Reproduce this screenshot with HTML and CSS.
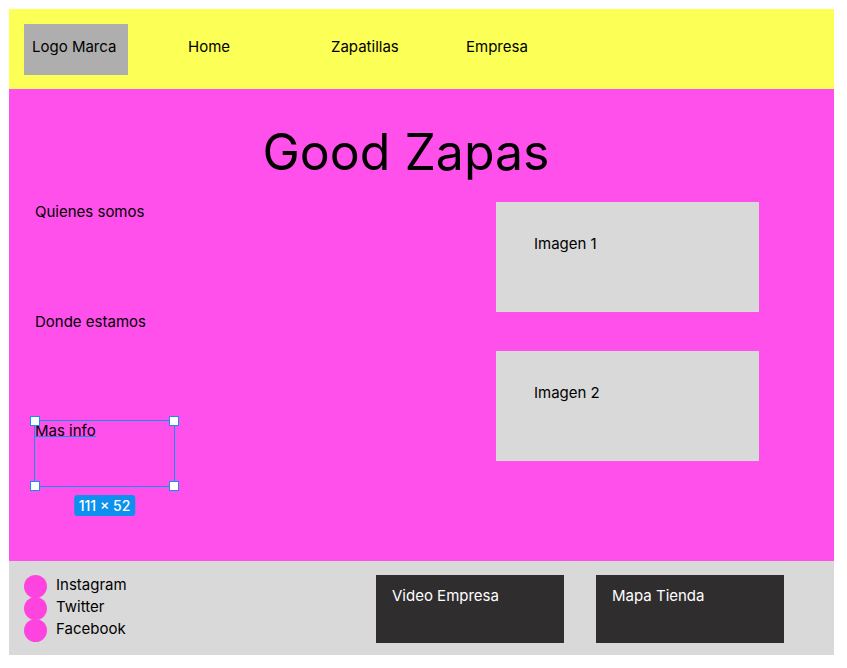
FILE: index.html
```html
<!DOCTYPE html>
<html lang="es">
<head>
<meta charset="utf-8">
<meta name="viewport" content="width=device-width, initial-scale=1">
<title>Good Zapas</title>
<link rel="stylesheet" href="styles.css">
</head>
<body>
<div class="page">
  <header class="header">
    <div class="logo">Logo Marca</div>
    <nav class="nav">
      <a href="#home">Home</a>
      <a href="#zapatillas">Zapatillas</a>
      <a href="#empresa">Empresa</a>
    </nav>
  </header>
  <main class="main">
    <h1 class="title">Good Zapas</h1>
    <div class="content">
      <div class="topics">
        <p class="topic">Quienes somos</p>
        <p class="topic">Donde estamos</p>
        <div class="selected">
          <span class="selected-text">Mas info</span>
          <i class="handle top left"></i>
          <i class="handle top right"></i>
          <i class="handle bottom left"></i>
          <i class="handle bottom right"></i>
          <span class="size">111 × 52</span>
        </div>
      </div>
      <div class="images">
        <div class="image">Imagen 1</div>
        <div class="image">Imagen 2</div>
      </div>
    </div>
  </main>
  <footer class="footer">
    <ul class="social">
      <li><a href="#instagram">Instagram</a></li>
      <li><a href="#twitter">Twitter</a></li>
      <li><a href="#facebook">Facebook</a></li>
    </ul>
    <div class="cards">
      <div class="card">Video Empresa</div>
      <div class="card">Mapa Tienda</div>
    </div>
  </footer>
</div>
</body>
</html>
```
FILE: styles.css
```css
* {
  box-sizing: border-box;
}

body {
  margin: 0;
  background: #fff;
  color: #000;
  font: 15px/20px Inter, "Liberation Sans", sans-serif;
}

a {
  color: inherit;
  text-decoration: none;
}

.page {
  padding: 9px 13px 13px 9px;
}

.header {
  display: flex;
  align-items: flex-start;
  padding: 15px 15px 14px;
  background: #fcff55;
}

.logo {
  width: 104px;
  padding: 13px 8px 18px;
  background: #aeaeae;
  white-space: nowrap;
}

.nav {
  display: grid;
  grid-template-columns: 143px 135px auto;
  margin-left: 60px;
  padding-top: 13px;
}

.main {
  padding: 31px 0 75px 26px;
  background: #ff50ec;
}

.title {
  margin: 0 57px 18px 0;
  font-size: 50px;
  font-weight: 400;
  line-height: 64px;
  text-align: center;
}

.content {
  display: grid;
  grid-template-columns: 461fr 338fr;
}

.topic {
  height: 110px;
  margin: 0;
}

.selected {
  position: relative;
  width: 139px;
  height: 65px;
  margin-top: -1px;
  outline: 1px solid #168eea;
}

.selected-text {
  display: block;
  width: max-content;
  height: 16px;
  border-bottom: 1px solid #168eea;
}

.handle {
  position: absolute;
  width: 10px;
  height: 10px;
  border: 1px solid #168eea;
  background: #fff;
}

.top { top: -5px; }
.bottom { bottom: -5px; }
.left { left: -5px; }
.right { right: -5px; }

.size {
  position: absolute;
  top: 74px;
  left: 50%;
  padding: 0 5px;
  border-radius: 3px;
  background: #0d90ee;
  color: #fff;
  font-size: 14px;
  font-weight: 500;
  line-height: 21px;
  white-space: nowrap;
  transform: translateX(-50%);
}

.images {
  display: grid;
  align-content: start;
  gap: 39px;
  margin-right: 75px;
}

.image {
  height: 110px;
  padding: 32px 38px;
  background: #d9d9d9;
}

.footer {
  display: grid;
  grid-template-columns: 352fr 458fr;
  padding: 14px 0 12px 15px;
  background: #d9d9d9;
}

.social {
  margin: 0;
  padding: 0;
  list-style: none;
}

.social li {
  display: flex;
  gap: 9px;
  height: 22px;
}

.social li::before {
  content: "";
  width: 23px;
  height: 23px;
  border-radius: 50%;
  background: #ff43df;
}

.cards {
  display: grid;
  grid-template-columns: 1fr 1fr;
  gap: 32px;
  margin-right: 50px;
}

.card {
  height: 68px;
  padding: 11px 16px;
  background: #302d2e;
  color: #fff;
}
```
